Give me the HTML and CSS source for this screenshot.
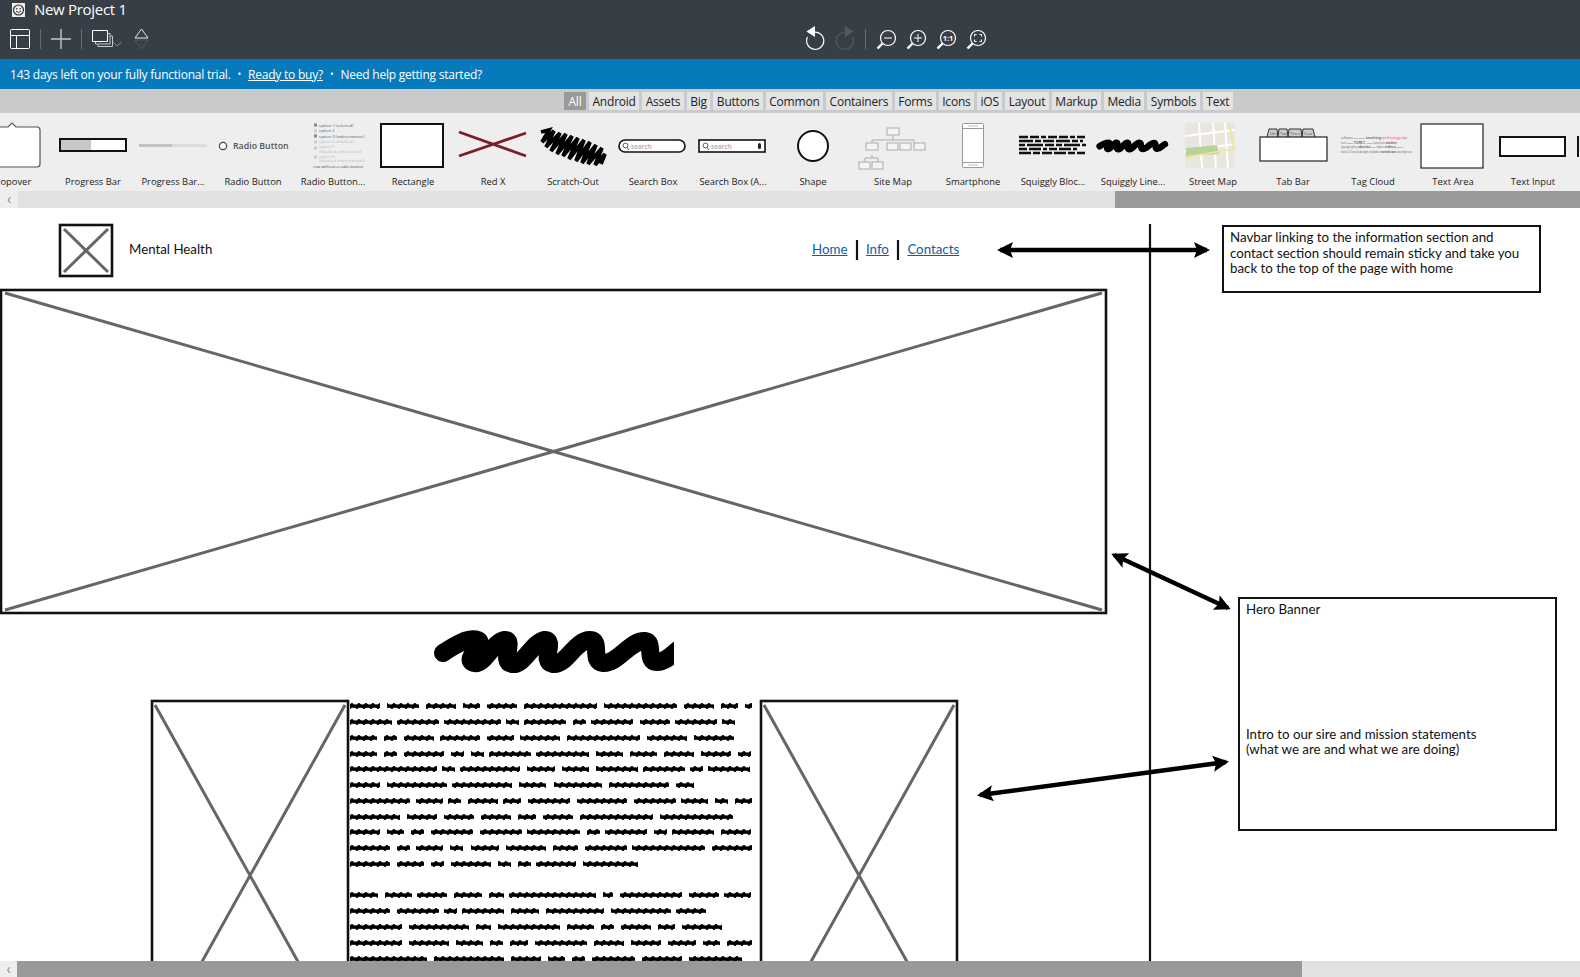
FILE: index.html
```html
<!DOCTYPE html>
<html lang="en">
<head>
    <meta charset="UTF-8">
    <title>New Project 1</title>
    <link rel="stylesheet" href="styles.css">
</head>
<body>

<!-- shared drawing parts -->
<svg class="defs">
    <defs>
        <pattern id="wave" y="-3" width="7" height="6" patternUnits="userSpaceOnUse">
            <rect y="1.4" width="7" height="3.4"/>
            <path d="M-1 5.500 L3 .5 M6 5.500 L10 .5 M-4 5.500 L0 .5" fill="none" stroke="#000" stroke-width="3"/>
        </pattern>
        <path id="squig" fill="none" stroke="#000" stroke-linecap="round" stroke-linejoin="round" d="M443 653 C455 645 468 637 478 640 C486 644 462 660 474 663 C484 666 492 642 505 640 C515 640 500 662 512 664 C524 666 532 642 545 640 C556 640 540 662 553 664 C566 666 575 640 590 640 C602 640 590 662 603 663 C618 664 630 640 645 641 C655 642 645 662 657 662 C668 662 675 650 685 645"/>
        <g id="lens" fill="none" stroke="#fff">
            <circle cx="12" cy="9" r="7.5" stroke-width="1.2"/>
            <path d="M6.5 14.5 L1.5 19.5" stroke-width="2.4"/>
        </g>
        <marker id="head" markerUnits="userSpaceOnUse" markerWidth="20" markerHeight="20" refX="13" refY="10" orient="auto-start-reverse">
            <path d="M0 2 L16 10 L0 18 L3 10 Z"/>
        </marker>
    </defs>
</svg>

<header class="topbar">
    <div class="titlerow">
        <svg width="15" height="16" viewBox="0 0 15 16">
            <path d="M1 1 H14 V15 H1 Z" fill="#eee"/>
            <circle cx="7.5" cy="8" r="5" fill="none" stroke="#333" stroke-width="1.2"/>
            <path d="M5 9 Q7.5 12 10 9" fill="none" stroke="#333"/>
            <circle cx="5.8" cy="6.8" r=".8" fill="#333"/><circle cx="9.2" cy="6.8" r=".8" fill="#333"/>
        </svg>
        <span class="title">New Project 1</span>
    </div>
    <div class="toolrow">
        <div class="tools tools-left">
            <svg width="20" height="20"><path d="M1.5 .5 H18.5 Q19.5 .5 19.5 1.5 V18.5 Q19.5 19.5 18.5 19.5 H1.5 Q.5 19.5 .5 18.5 V1.5 Q.5 .5 1.5 .5 Z M.5 6.5 H19.5 M6.5 6.5 V19.5" fill="none" stroke="#fff"/></svg>
            <span class="sep"></span>
            <svg width="20" height="20"><path d="M10 0 V20 M0 10 H20" stroke="#c4c6c9" stroke-width="1.4"/></svg>
            <span class="sep"></span>
            <svg width="30" height="20"><path d="M.5 1.5 H15.5 V12.5 H.5 Z" fill="none" stroke="#fff"/><path d="M15.5 4.5 H18 V15 H3.5 V13 M18 7 H20.5 V17.5 H6 V15.5" fill="none" stroke="#c4c6c9"/><path d="M21 13 L25 17 L29.5 13" fill="none" stroke="#8a8d91"/></svg>
            <svg class="updown" width="15" height="22"><path d="M7.5 1 L14 10 H1 Z" fill="none" stroke="#e8e8e8"/><path d="M1 12 H14 L7.5 21 Z" fill="none" stroke="#555a60"/></svg>
        </div>
        <div class="tools">
            <svg width="20" height="26"><path d="M8 6.5 A8.6 8.6 0 1 1 2.5 11" fill="none" stroke="#fff" stroke-width="1.2"/><path d="M10 0 V11 L1.5 5.5 Z" fill="#fff"/></svg>
            <svg width="20" height="26"><path d="M12 6.5 A8.6 8.6 0 1 0 17.5 11" fill="none" stroke="#55595f" stroke-width="1.2"/><path d="M10 0 V11 L18.5 5.5 Z" fill="#55595f"/></svg>
            <span class="sep"></span>
            <svg width="20" height="20"><use href="#lens"/><path d="M8 9 H16" stroke="#fff"/></svg>
            <svg width="20" height="20"><use href="#lens"/><path d="M8 9 H16 M12 5 V13" stroke="#fff"/></svg>
            <svg width="20" height="20"><use href="#lens"/><text class="onetoone" x="12" y="11.500">1:1</text></svg>
            <svg width="20" height="20"><use href="#lens"/><path d="M8.5 7.5 V5.5 H10.5 M13.5 5.5 H15.5 V7.5 M15.5 10.5 V12.5 H13.5 M10.5 12.5 H8.5 V10.5" fill="none" stroke="#fff"/></svg>
        </div>
    </div>
</header>

<div class="trial">
    <span>143 days left on your fully functional trial.</span>
    <span class="dot">•</span>
    <a href="#">Ready to buy?</a>
    <span class="dot">•</span>
    <span>Need help getting started?</span>
</div>

<div class="filters">
    <span class="tab tab-on">All</span>
    <span class="tab">Android</span>
    <span class="tab">Assets</span>
    <span class="tab">Big</span>
    <span class="tab">Buttons</span>
    <span class="tab">Common</span>
    <span class="tab">Containers</span>
    <span class="tab">Forms</span>
    <span class="tab">Icons</span>
    <span class="tab">iOS</span>
    <span class="tab">Layout</span>
    <span class="tab">Markup</span>
    <span class="tab">Media</span>
    <span class="tab">Symbols</span>
    <span class="tab">Text</span>
</div>

<div class="library">
    <div class="item"><svg width="80" height="56"><path d="M10 9 H35 L39 5 L43 9 H64 Q67 9 67 12 V46 Q67 49 64 49 H10 Z" fill="#fff" stroke="#555" stroke-width="1.2"/></svg><span class="lbl">Popover</span></div>
    <div class="item"><svg width="80" height="56"><rect x="7" y="21" width="66" height="12" fill="#fff" stroke="#111" stroke-width="2"/><rect x="8" y="22" width="30" height="10" fill="#c8c8c8"/></svg><span class="lbl">Progress Bar</span></div>
    <div class="item"><svg width="80" height="56"><rect x="6" y="26" width="68" height="3" fill="#ddd"/><rect x="6" y="26" width="33" height="3" fill="#c2c2c2"/></svg><span class="lbl">Progress Bar...</span></div>
    <div class="item"><svg width="80" height="56"><circle cx="10" cy="28" r="3.6" fill="#fff" stroke="#444" stroke-width="1.2"/><text class="thumbtext" x="20" y="31">Radio Button</text></svg><span class="lbl">Radio Button</span></div>
    <div class="item"><svg width="80" height="56">
        <path d="M21 7 H24 M21 18 H24" stroke="#888" stroke-width="3"/><path d="M21 13 H24 M21 24 H24 M21 30 H24 M21 39 H24" stroke="#ccc" stroke-width="3"/>
        <g class="tinytext">
            <text x="26" y="8.500">option 1 (selected)</text>
            <text x="26" y="14">option 2</text>
            <text x="26" y="19.500">option 3 (indeterminate)</text>
            <text class="tinydim" x="26" y="25">option 4 (disabled)</text>
            <text class="tinydim" x="26" y="30">option 5</text>
            <text class="tinydim" x="26" y="34.500">(disabled and selected)</text>
            <text class="tinydim" x="26" y="40">option 6</text>
            <text class="tinydim" x="26" y="44">(disabled indeterminate)</text>
            <text x="20" y="49.500">row without a radio button</text>
        </g></svg><span class="lbl">Radio Button...</span></div>
    <div class="item"><svg width="80" height="56"><rect x="8" y="6" width="62" height="43" fill="#fff" stroke="#111" stroke-width="2"/></svg><span class="lbl">Rectangle</span></div>
    <div class="item"><svg width="80" height="56"><path d="M6 14 L73 38 M6 38 L73 15" stroke="#7b1c2c" stroke-width="2.8"/></svg><span class="lbl">Red X</span></div>
    <div class="item"><svg width="80" height="56"><path d="M8 14 L16 12 L9 24 L21 13 L13 29 L27 15 L18 33 L33 16 L24 36 L39 18 L30 38 L45 20 L36 41 L51 22 L43 43 L57 24 L49 45 L63 27 L55 46 L69 30 L62 47 L72 36 L68 46" fill="none" stroke="#000" stroke-width="3.8"/></svg><span class="lbl">Scratch-Out</span></div>
    <div class="item"><svg width="80" height="56"><rect x="6" y="22" width="66" height="12" rx="6" fill="#fff" stroke="#111" stroke-width="1.6"/><circle cx="12.500" cy="27.500" r="2.400" fill="none" stroke="#555"/><path d="M14 29.500 L16 32" stroke="#555"/><text class="searchtext" x="18" y="30.500">search</text></svg><span class="lbl">Search Box</span></div>
    <div class="item"><svg width="80" height="56"><rect x="6" y="22" width="66" height="12" fill="#fff" stroke="#111" stroke-width="1.6"/><circle cx="12.500" cy="27.500" r="2.400" fill="none" stroke="#555"/><path d="M14 29.500 L16 32" stroke="#555"/><text class="searchtext" x="18" y="30.500">search</text><rect x="65" y="25" width="3" height="6" rx="1.500" fill="#222"/></svg><span class="lbl">Search Box (A...</span></div>
    <div class="item"><svg width="80" height="56"><circle cx="40" cy="28" r="15" fill="#fff" stroke="#111" stroke-width="2"/></svg><span class="lbl">Shape</span></div>
    <div class="item"><svg class="sitemap" width="80" height="56"><path d="M40 18 V22 M19 25 V22 H61 V25 M19 37 V40 M12 44 V40 H25 V44" fill="none"/><rect x="34" y="10" width="12" height="7"/><rect x="13" y="25" width="12" height="7"/><rect x="34" y="25" width="11" height="7"/><rect x="47" y="25" width="11" height="7"/><rect x="61" y="25" width="11" height="7"/><rect x="6" y="44" width="11" height="7"/><rect x="19" y="44" width="11" height="7"/></svg><span class="lbl">Site Map</span></div>
    <div class="item"><svg width="80" height="56"><rect x="29.500" y="5.500" width="21" height="44" rx="1" fill="#fff" stroke="#999"/><path d="M30 10.500 H50 M30 44.500 H50" stroke="#999"/><path d="M35 8 H45 M35 47 H45" stroke="#bbb"/></svg><span class="lbl">Smartphone</span></div>
    <div class="item"><svg width="80" height="56"><g stroke="#111" stroke-width="2.400"><path d="M6 19 H72" stroke-dasharray="9 2 9 2 5 2"/><path d="M6 23 H70" stroke-dasharray="14 2 6 2 11 2"/><path d="M6 27 H73" stroke-dasharray="6 2 16 2 9 2"/><path d="M6 31 H66" stroke-dasharray="8 2 12 2 4 2"/><path d="M6 35 H72" stroke-dasharray="12 2 7 2 10 2"/></g></svg><span class="lbl">Squiggly Bloc...</span></div>
    <div class="item"><svg width="80" height="56"><use href="#squig" stroke-width="24" transform="translate(-113 -148) scale(.27)"/></svg><span class="lbl">Squiggly Line...</span></div>
    <div class="item"><svg width="80" height="56"><rect x="12" y="5" width="50" height="45" fill="#e9e6df"/><path d="M12 18 L62 12 M12 33 L62 26 M26 5 L29 50 M40 5 L43 50 M52 5 L55 50" stroke="#fff" stroke-width="2"/><path d="M13 30 L44 27 L46 36 L13 38 Z" fill="#b8d29c"/><path d="M56 5 L61 31 L13 39" fill="none" stroke="#f3e88a" stroke-width="1.500"/></svg><span class="lbl">Street Map</span></div>
    <div class="item"><svg width="80" height="56"><path d="M14 19 L16 11 H24 L25 19 M25 19 L26 11 H34 L35 19 M35 19 L36 11 H48 L49 19 M49 19 L50 11 H60 L62 19" fill="#ccc" stroke="#333"/><rect x="7" y="19" width="67" height="24" fill="#fff" stroke="#222" stroke-width="1.200"/>
        <g class="tinytext"><text x="17" y="17">One</text><text x="27" y="17">Two</text><text x="37" y="17">Three</text><text x="51" y="17">Four</text></g></svg><span class="lbl">Tab Bar</span></div>
    <div class="item"><svg class="cloud" width="80" height="56">
        <text x="8" y="21">software <tspan class="cloud-sm">education</tspan> <tspan class="cloud-lg">teaching</tspan> <tspan class="cloud-red">technology</tspan> tips</text>
        <text x="8" y="25.500">tool <tspan class="cloud-sm">tools</tspan> <tspan class="cloud-lg">TOREC</tspan> <tspan class="cloud-sm">travel</tspan> tutorials <tspan class="cloud-lg">twitter</tspan></text>
        <text x="8" y="30">typography <tspan class="cloud-lg">ubuntu</tspan> <tspan class="cloud-sm">usa</tspan> video <tspan class="cloud-lg">videos</tspan> <tspan class="cloud-sm">visual</tspan></text>
        <text x="8" y="34.500">web 2.0 web design webdev <tspan class="cloud-lg">windows</tspan> wordpress</text>
    </svg><span class="lbl">Tag Cloud</span></div>
    <div class="item"><svg width="80" height="56"><rect x="8" y="6" width="62" height="44" fill="#fff" stroke="#222" stroke-width="1.200"/></svg><span class="lbl">Text Area</span></div>
    <div class="item"><svg width="80" height="56"><rect x="7" y="19" width="65" height="19" fill="#fff" stroke="#111" stroke-width="2"/></svg><span class="lbl">Text Input</span></div>
    <div class="item"><svg width="80" height="56"><path d="M5 18 V39" stroke="#111" stroke-width="2"/></svg></div>
</div>

<div class="hscroll hscroll-top"><span class="arrow">‹</span><span class="thumb thumb-top"></span></div>

<main class="canvas">
    <!-- wireframe drawing: coordinates are the page coordinates, shifted up by the chrome above -->
    <svg class="sketch" width="1580" height="753" viewBox="0 208 1580 753">
        <defs>
            <clipPath id="cut"><rect x="420" y="620" width="254" height="60"/></clipPath>
        </defs>
        <path class="line" d="M1150 224 V961"/>

        <g class="ph">
            <rect x="60" y="225" width="52" height="51"/>
            <path d="M64 229 L108 272 M108 229 L64 272"/>
            <rect x="1" y="290" width="1105" height="323"/>
            <path d="M5 293 L1102 610 M1102 293 L5 610"/>
            <rect x="152" y="701" width="196" height="350"/>
            <path d="M155 705 L345 1046 M345 705 L155 1046"/>
            <rect x="761" y="701" width="196" height="350"/>
            <path d="M764 705 L954 1046 M954 705 L764 1046"/>
        </g>

        <path class="line" d="M857 240 V260 M898 240 V260"/>

        <g class="arrows">
            <path d="M1000 250 H1207"/>
            <path d="M1114 555 L1228 608"/>
            <path d="M980 795 L1226 762"/>
        </g>

        <g clip-path="url(#cut)"><use href="#squig" stroke-width="18"/></g>

        <g class="words" transform="translate(350 706)">
            <path d="M0 0 H402" stroke-dasharray="30 7 32 7 30 7 17 7 30 7 73 7 73 7 30 7 17 7 13 400"/>
            <path transform="translate(0 16)" d="M0 0 H402" stroke-dasharray="42 5 42 5 57 5 13 5 42 7 13 5 42 7 30 5 42 5 13 400"/>
            <path transform="translate(0 32)" d="M0 0 H402" stroke-dasharray="27 7 13 7 30 6 40 7 27 6 40 7 73 7 40 7 40 400"/>
            <path transform="translate(0 48)" d="M0 0 H402" stroke-dasharray="27 7 13 7 40 7 13 7 13 5 42 5 53 7 27 7 27 7 30 7 30 7 13 400"/>
            <path transform="translate(0 63)" d="M0 0 H402" stroke-dasharray="87 5 13 5 60 7 28 7 27 7 42 5 42 5 13 5 42 400"/>
            <path transform="translate(0 79)" d="M0 0 H402" stroke-dasharray="30 7 60 5 60 7 27 8 48 7 60 7 18 400"/>
            <path transform="translate(0 95)" d="M0 0 H402" stroke-dasharray="60 6 27 5 13 7 30 5 18 7 42 7 50 7 42 5 27 7 13 7 20 400"/>
            <path transform="translate(0 111)" d="M0 0 H402" stroke-dasharray="50 7 30 7 30 7 30 7 18 7 30 7 73 7 73 400"/>
            <path transform="translate(0 126)" d="M0 0 H402" stroke-dasharray="30 7 17 7 13 7 42 7 42 5 53 7 13 5 42 7 13 5 42 7 30 400"/>
            <path transform="translate(0 142)" d="M0 0 H402" stroke-dasharray="40 7 13 6 27 7 13 8 28 7 40 7 25 7 42 5 73 7 42 400"/>
            <path transform="translate(0 158)" d="M0 0 H402" stroke-dasharray="40 7 27 7 13 7 40 7 13 7 13 5 40 7 55 400"/>
            <path transform="translate(0 189)" d="M0 0 H402" stroke-dasharray="28 7 27 5 30 7 28 7 15 5 87 7 10 7 62 7 30 5 27 400"/>
            <path transform="translate(0 205)" d="M0 0 H402" stroke-dasharray="40 7 42 5 13 5 42 7 28 7 58 7 60 5 30 400"/>
            <path transform="translate(0 221)" d="M0 0 H402" stroke-dasharray="52 7 60 7 15 7 62 7 27 7 13 7 30 7 17 7 40 400"/>
            <path transform="translate(0 237)" d="M0 0 H402" stroke-dasharray="52 7 40 7 27 7 13 7 18 7 52 7 30 7 30 7 28 7 17 7 30 400"/>
            <path transform="translate(0 253)" d="M0 0 H402" stroke-dasharray="77 7 70 7 30 7 17 7 13 7 43 7 40 7 53 400"/>
        </g>
    </svg>

    <div class="brand">Mental Health</div>
    <nav class="links">
        <a href="#">Home</a>
        <a href="#">Info</a>
        <a href="#">Contacts</a>
    </nav>

    <div class="note note-nav">Navbar linking to the information section and<br>contact section should remain sticky and take you<br>back to the top of the page with home</div>
    <div class="note note-hero">
        <p>Hero Banner</p>
        <p class="note-gap">Intro to our sire and mission statements<br>(what we are and what we are doing)</p>
    </div>
</main>

<div class="hscroll hscroll-bottom"><span class="arrow">‹</span><span class="thumb thumb-bottom"></span></div>

</body>
</html>
```

FILE: styles.css
```css
html, body{
    margin: 0;
    height: 100%;
    overflow: hidden;
}
body{
    display: flex;
    flex-direction: column;
    font-family: "Open Sans", "Noto Sans", sans-serif;
    background-color: #fff;
}
.defs{
    position: absolute;
    width: 0;
    height: 0;
}

/* top bar */
.topbar{
    height: 59px;
    background-color: #383e46;
    color: #fff;
    flex: none;
}
.titlerow{
    height: 19px;
    display: flex;
    align-items: center;
    gap: 8px;
    padding-left: 11px;
}
.title{
    font-size: 15px;
    letter-spacing: -0.3px;
    margin-bottom: 2px;
}
.toolrow{
    height: 39px;
    display: flex;
    align-items: center;
    padding-left: 10px;
}
.tools{
    display: flex;
    align-items: center;
    gap: 10px;
}
.tools-left{
    width: 795px;
}
.sep{
    width: 1px;
    height: 20px;
    background-color: #686c72;
}
.updown{
    margin-left: 2px;
}
.onetoone{
    font-size: 7.5px;
    font-weight: 700;
    fill: #fff;
    text-anchor: middle;
}

/* trial banner */
.trial{
    height: 30px;
    flex: none;
    display: flex;
    align-items: center;
    gap: 7px;
    padding-left: 10px;
    background-color: #067abb;
    color: #fff;
    font-size: 12px;
    letter-spacing: -0.23px;
}
.trial a{
    color: #fff;
}
.dot{
    font-size: 10px;
}

/* filter tabs */
.filters{
    height: 24px;
    flex: none;
    box-sizing: border-box;
    padding: 3px 0 3px 564px;
    display: flex;
    gap: 3px;
    background-color: #c9cacc;
    font-size: 12px;
    letter-spacing: -0.22px;
}
.tab{
    padding: 0 3.5px;
    height: 18px;
    line-height: 19px;
    background-color: #e3e3e3;
    color: #222;
}
.tab-on{
    padding: 0 4.5px;
    background-color: #999;
    color: #fff;
}

/* component library */
.library{
    height: 78px;
    flex: none;
    box-sizing: border-box;
    padding: 5px 0 0 0;
    display: flex;
    overflow: hidden;
    background-color: #eee;
}
.item{
    width: 80px;
    flex: none;
    display: flex;
    flex-direction: column;
    align-items: center;
}
.item:first-child{
    margin-left: -27px;
}
.lbl{
    line-height: 14px;
    margin-top: 1px;
    font-size: 9.4px;
    color: #222;
    white-space: nowrap;
}
.thumbtext{
    font-size: 8.8px;
    font-weight: 600;
    fill: #555;
}
.searchtext{
    font-size: 6.5px;
    fill: #aaa;
    font-weight: 600;
}
.tinytext{
    font-size: 4px;
    fill: #555;
}
.tinydim{
    fill: #bbb;
}
.sitemap{
    stroke: #aaa;
    fill: #f4f4f4;
}
.cloud{
    font-size: 3px;
    fill: #666;
}
.cloud-sm{
    font-size: 2.4px;
}
.cloud-lg{
    font-size: 3.8px;
    fill: #222;
}
.cloud-red{
    font-size: 3.8px;
    fill: #f44;
}

/* scrollbars */
.hscroll{
    flex: none;
    display: flex;
    background-color: #e1e1e1;
}
.hscroll-top{
    height: 17px;
}
.hscroll-bottom{
    height: 16px;
}
.arrow{
    width: 18px;
    text-align: center;
    font-size: 14px;
    line-height: 15px;
    color: #888;
    background-color: #eee;
}
.hscroll-bottom .arrow{
    width: 17px;
}
.thumb{
    background-color: #999;
}
.thumb-top{
    width: 465px;
    margin-left: auto;
}
.thumb-bottom{
    width: 1285px;
}

/* wireframe canvas */
.canvas{
    position: relative;
    flex: 1;
    overflow: hidden;
    font-family: "Lato", sans-serif;
    font-size: 13.3px;
    color: #111;
}
.sketch{
    position: absolute;
    top: 0;
    left: 0;
}
.line{
    fill: none;
    stroke: #111;
    stroke-width: 2.2;
}
.ph rect{
    fill: none;
    stroke: #111;
    stroke-width: 2.6;
}
.ph path{
    fill: none;
    stroke: #666;
    stroke-width: 3;
}
.arrows path{
    fill: none;
    stroke: #000;
    stroke-width: 4.5;
    marker-start: url(#head);
    marker-end: url(#head);
}
.words path{
    fill: none;
    stroke: url(#wave);
    stroke-width: 6;
}
.brand{
    position: absolute;
    left: 129px;
    top: 32px;
    line-height: 18px;
}
.links{
    position: absolute;
    left: 812px;
    top: 32px;
    display: flex;
    gap: 18.5px;
    line-height: 18px;
}
.links a{
    color: #0b5ea8;
}
.note{
    position: absolute;
    box-sizing: border-box;
    background-color: #fff;
    border: 2.5px solid #111;
    line-height: 15.6px;
}
.note p{
    margin: 0;
}
.note-nav{
    left: 1222px;
    top: 17px;
    width: 319px;
    height: 68px;
    padding: 3px 0 0 6px;
}
.note-hero{
    left: 1238px;
    top: 389px;
    width: 319px;
    height: 234px;
    padding: 3px 0 0 6px;
}
.note-gap{
    margin-top: 109px !important;
}
```
